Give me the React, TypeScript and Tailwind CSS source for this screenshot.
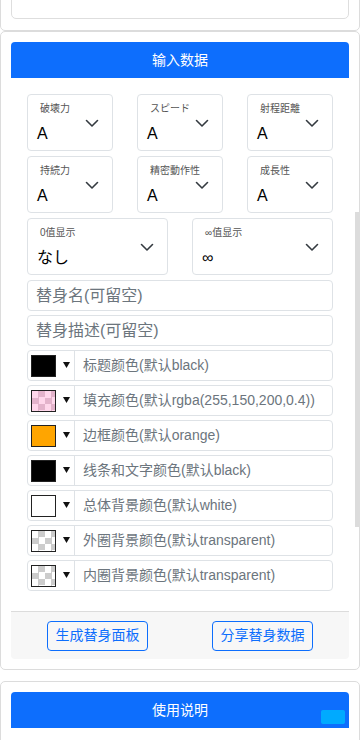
import React from "react";

const FONT = { fontFamily: '"Liberation Sans", "Noto Sans CJK SC", sans-serif' };

function Chevron() {
  return (
    <svg width="14" height="10" viewBox="0 0 14 10" className="shrink-0">
      <path d="M1.5 2.5 L7 8 L12.5 2.5" fill="none" stroke="#343a40" strokeWidth="1.6" strokeLinecap="round" strokeLinejoin="round" />
    </svg>
  );
}

function SelectBox({ label, value }: { label: string; value: string }) {
  return (
    <div className="h-[57px] border border-[#dee2e6] rounded-[4px] flex items-center pr-[13px] bg-white">
      <div className="flex-1 flex flex-col min-w-0">
        <div className="pl-[12px] text-[10px] leading-[12px] text-[#555] mt-[2px] whitespace-nowrap">{label}</div>
        <div className="pl-[9px] text-[16px] leading-[20px] text-black mt-[9px]">{value}</div>
      </div>
      <Chevron />
    </div>
  );
}

function TextInput({ placeholder }: { placeholder: string }) {
  return (
    <div className="h-[31px] border border-[#dee2e6] rounded-[4px] flex items-center pl-[8px] text-[16px] text-[#6c757d]">
      {placeholder}
    </div>
  );
}

type SwatchKind = "black" | "pink" | "orange" | "white" | "trans";

function Swatch({ kind }: { kind: SwatchKind }) {
  const base = "w-[25px] h-[22px] border border-[#222] shrink-0";
  if (kind === "black") return <div className={`${base} bg-black`} />;
  if (kind === "orange") return <div className={`${base} bg-[#ffa500]`} />;
  if (kind === "white") return <div className={`${base} bg-white`} />;
  if (kind === "pink")
    return (
      <div
        className={`${base} bg-[#ffd6ea] bg-[repeating-conic-gradient(#e3b3cb_0_25%,#ffd7eb_0_50%)] bg-[length:13px_13px]`}
      />
    );
  return (
    <div
      className={`${base} bg-white bg-[repeating-conic-gradient(#cccccc_0_25%,#ffffff_0_50%)] bg-[length:13px_13px]`}
    />
  );
}

function ColorRow({ kind, text }: { kind: SwatchKind; text: string }) {
  return (
    <div className="h-[31px] border border-[#dee2e6] rounded-[4px] flex items-stretch">
      <div className="w-[47px] flex items-center pl-[3px] border-r border-[#dee2e6] shrink-0">
        <Swatch kind={kind} />
        <svg width="7" height="6" viewBox="0 0 7 6" className="ml-[7px] mb-[2px]">
          <path d="M0 0 H7 L3.5 6 Z" fill="#111" />
        </svg>
      </div>
      <div className="flex items-center pl-[8px] text-[14px] text-[#6c757d] whitespace-nowrap">{text}</div>
    </div>
  );
}

function BlueHeader({ text }: { text: string }) {
  return (
    <div className="h-[36px] bg-[#0d6efd] rounded-t-[4px] flex items-center justify-center text-white text-[14px]">
      {text}
    </div>
  );
}

export default function App() {
  return (
    <div className="relative w-[360px] h-[740px] overflow-hidden bg-white" style={FONT}>
      {/* card 1 (scrolled partly out of view) */}
      <div className="-mt-[40px] border border-[#dcdcdc] rounded-[5px] p-[10px] pb-[11px]">
        <div className="h-[48px] border border-[#dedede] rounded-[5px]" />
      </div>

      {/* card 2 */}
      <div className="border border-[#dcdcdc] rounded-[5px] p-[10px]">
        <BlueHeader text="输入数据" />
        <div className="px-[16px] pt-[16px]">
          <div className="grid grid-cols-3 gap-x-[24px] gap-y-[5px]">
            <SelectBox label="破壊力" value="A" />
            <SelectBox label="スピード" value="A" />
            <SelectBox label="射程距離" value="A" />
            <SelectBox label="持続力" value="A" />
            <SelectBox label="精密動作性" value="A" />
            <SelectBox label="成長性" value="A" />
          </div>
          <div className="grid grid-cols-2 gap-x-[24px] mt-[5px]">
            <SelectBox label="0值显示" value="なし" />
            <SelectBox label="∞值显示" value="∞" />
          </div>
          <div className="flex flex-col gap-[4px] mt-[5px]">
            <TextInput placeholder="替身名(可留空)" />
            <TextInput placeholder="替身描述(可留空)" />
            <ColorRow kind="black" text="标题颜色(默认black)" />
            <ColorRow kind="pink" text="填充颜色(默认rgba(255,150,200,0.4))" />
            <ColorRow kind="orange" text="边框颜色(默认orange)" />
            <ColorRow kind="black" text="线条和文字颜色(默认black)" />
            <ColorRow kind="white" text="总体背景颜色(默认white)" />
            <ColorRow kind="trans" text="外圈背景颜色(默认transparent)" />
            <ColorRow kind="trans" text="内圈背景颜色(默认transparent)" />
          </div>
        </div>
        <div className="mt-[20px] border-t border-[#dcdcdc] bg-[#f7f7f7] rounded-b-[4px] h-[48px] flex items-center justify-between px-[36px]">
          <div className="h-[30px] w-[101px] border border-[#0d6efd] rounded-[4px] flex items-center justify-center text-[#0d6efd] text-[14px]">
            生成替身面板
          </div>
          <div className="h-[30px] w-[101px] border border-[#0d6efd] rounded-[4px] flex items-center justify-center text-[#0d6efd] text-[14px]">
            分享替身数据
          </div>
        </div>
      </div>

      {/* card 3 */}
      <div className="mt-[11px] border border-[#dcdcdc] rounded-[5px] p-[10px] pb-[20px]">
        <BlueHeader text="使用说明" />
      </div>

      {/* floating small button */}
      <div className="absolute left-[321px] top-[710px] w-[24px] h-[14px] rounded-[2px] bg-[#00aaff]" />

      {/* scrollbar thumb */}
      <div className="absolute left-[355px] top-[212px] w-[4px] h-[315px] bg-[#dcdcdc]" />
    </div>
  );
}
